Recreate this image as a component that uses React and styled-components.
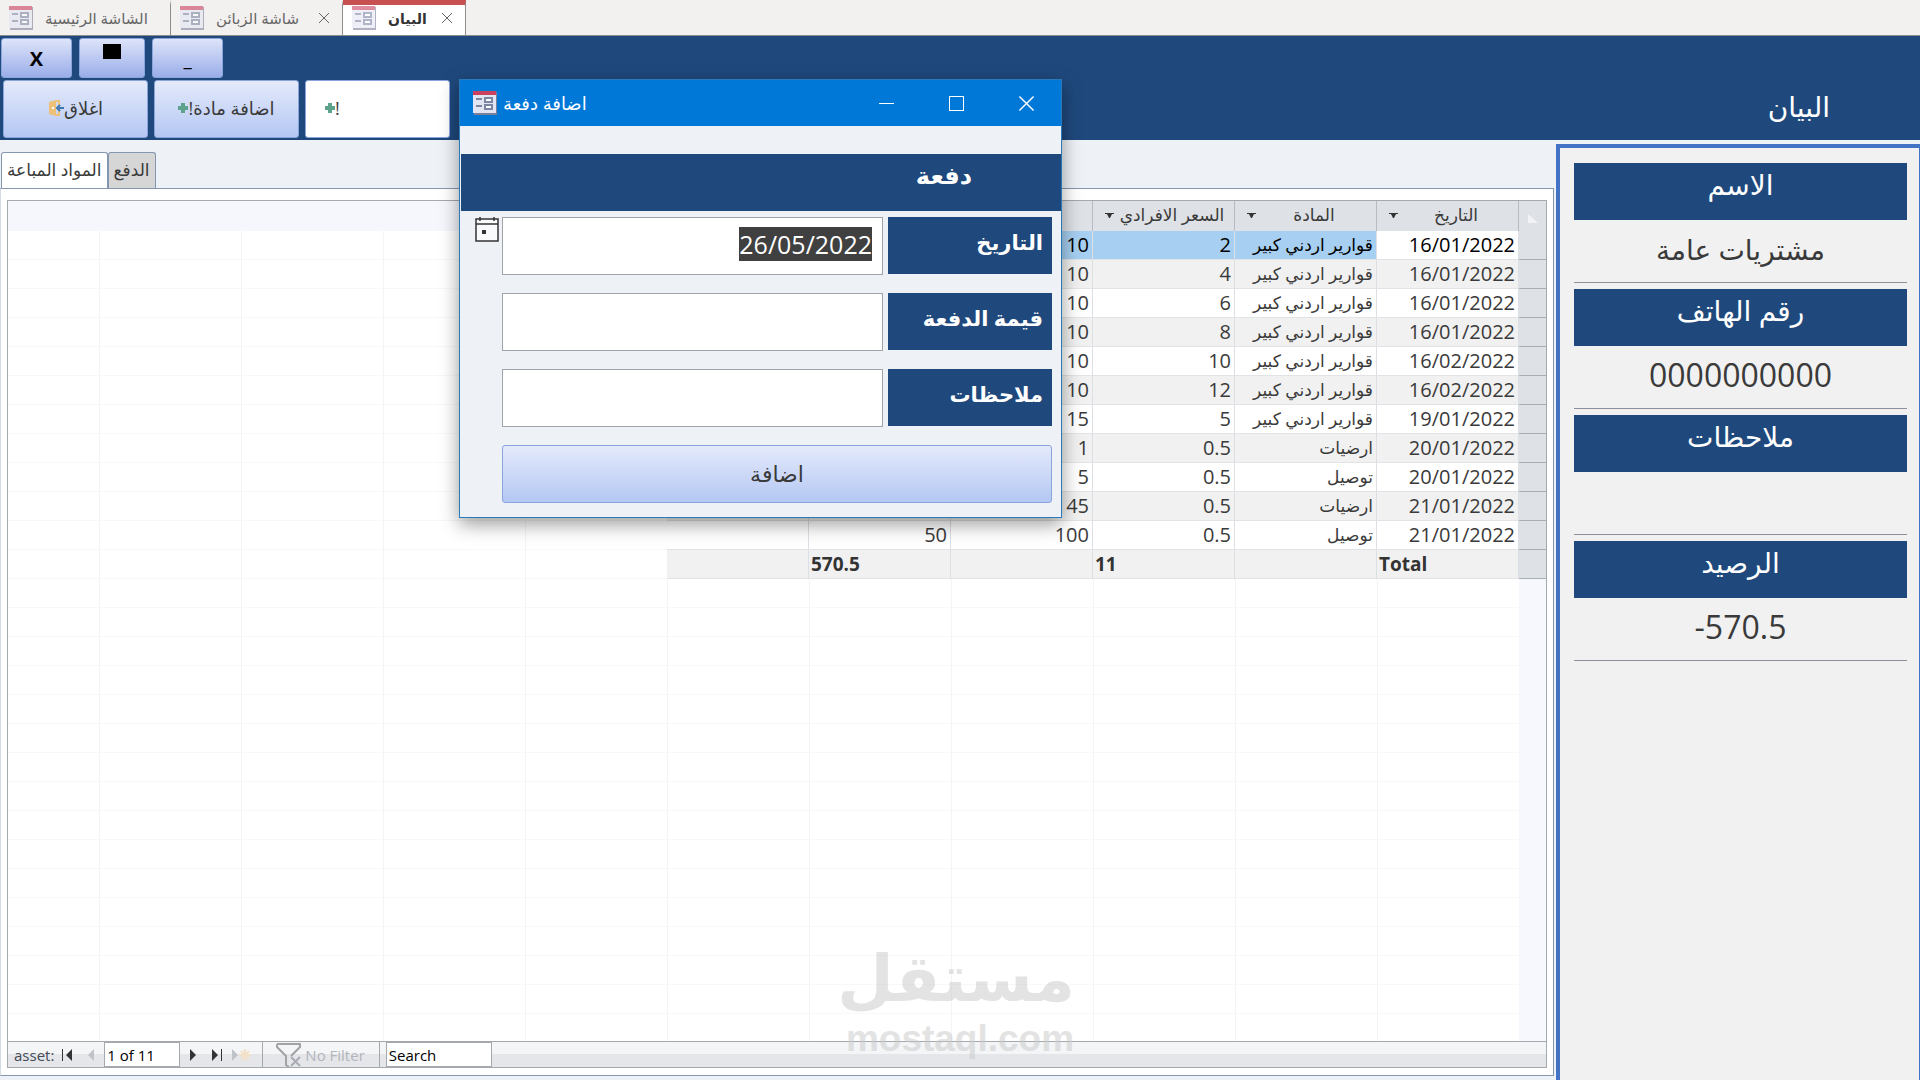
import React, { useEffect, useRef, useState } from 'react'
import styled, { createGlobalStyle } from 'styled-components'

const SALES = [
  { date: '16/01/2022', item: 'قوارير اردني كبير', price: 2, count: 10, sum: 20 },
  { date: '16/01/2022', item: 'قوارير اردني كبير', price: 4, count: 10, sum: 40 },
  { date: '16/01/2022', item: 'قوارير اردني كبير', price: 6, count: 10, sum: 60 },
  { date: '16/01/2022', item: 'قوارير اردني كبير', price: 8, count: 10, sum: 80 },
  { date: '16/02/2022', item: 'قوارير اردني كبير', price: 10, count: 10, sum: 100 },
  { date: '16/02/2022', item: 'قوارير اردني كبير', price: 12, count: 10, sum: 120 },
  { date: '19/01/2022', item: 'قوارير اردني كبير', price: 5, count: 15, sum: 75 },
  { date: '20/01/2022', item: 'ارضيات', price: 0.5, count: 1, sum: 0.5 },
  { date: '20/01/2022', item: 'توصيل', price: 0.5, count: 5, sum: 2.5 },
  { date: '21/01/2022', item: 'ارضيات', price: 0.5, count: 45, sum: 22.5 },
  { date: '21/01/2022', item: 'توصيل', price: 0.5, count: 100, sum: 50 }
]

const HEADERS = ['التاريخ', 'المادة', 'السعر الافرادي', 'العدد', 'المجموع', 'ملاحظات']

const DETAILS = [
  { id: 'name', label: 'الاسم', value: 'مشتريات عامة' },
  { id: 'phone', label: 'رقم الهاتف', value: '0000000000', numeric: true },
  { id: 'notes', label: 'ملاحظات', value: '' },
  { id: 'balance', label: 'الرصيد', value: '-570.5', numeric: true }
]

const FormIcon = ({ faded }) => (
  <svg width='24' height='24' viewBox='0 0 24 24' opacity={faded ? 0.6 : 1} aria-hidden='true'>
    <rect x='1' y='1' width='23' height='23' fill='#7d7f99' />
    <rect x='0' y='0' width='23' height='22' fill='#e3e6f2' />
    <rect x='0' y='0' width='23' height='4' fill='#c9415f' />
    <path d='M3 8h6M3 15h6' stroke='#7d85a0' strokeWidth='2' />
    <rect x='12' y='7' width='7' height='4' fill='#fff' stroke='#7c85a2' strokeWidth='2' />
    <rect x='12' y='14' width='7' height='4' fill='#fff' stroke='#7c85a2' strokeWidth='2' />
  </svg>
)

const CrossIcon = ({ size }) => (
  <svg width={size} height={size} viewBox='0 0 12 12' aria-hidden='true'>
    <path d='M1 1l10 10M11 1L1 11' stroke='currentColor' fill='none' />
  </svg>
)

const PlusIcon = () => (
  <svg width='10' height='10' viewBox='0 0 10 10' aria-hidden='true'>
    <path d='M5 0v10M0 5h10' stroke='#5da28a' strokeWidth='4' />
  </svg>
)

const DoorIcon = () => (
  <svg width='16' height='16' viewBox='0 0 16 16' aria-hidden='true'>
    <path d='M1 2l7-2v16l-7-2z' fill='#edc177' />
    <path d='M8 1h3v4M8 15h3v-4' stroke='#edc177' strokeWidth='2' fill='none' />
    <rect x='4' y='7' width='2' height='2' fill='#fff' />
    <path d='M16 8h-5M12 5L9 8l3 3' stroke='#3f76b0' strokeWidth='2' fill='none' />
  </svg>
)

const CalendarIcon = () => (
  <svg width='24' height='25' viewBox='0 0 24 25' aria-hidden='true'>
    <rect x='1' y='2' width='22' height='22' fill='#f9fafc' stroke='#333' strokeWidth='1.5' />
    <path d='M1 7h22' stroke='#333' strokeWidth='1.5' />
    <path d='M5 0v4M19 0v4' stroke='#333' strokeWidth='1.5' />
    <rect x='7' y='13' width='4' height='4' fill='#333' />
  </svg>
)

const FunnelIcon = () => (
  <svg width='25' height='24' viewBox='0 0 25 24' aria-hidden='true'>
    <path d='M1 1h23v3l-9 9M1 1v3l9 9v9l3 2' stroke='#a3a3a3' strokeWidth='2' fill='none' />
    <path d='M15 14l9 9M24 14l-9 9' stroke='#a9abb5' strokeWidth='2' />
  </svg>
)

const NavIcon = ({ kind }) => (
  <svg width='12' height='12' viewBox='0 0 12 12' fill='currentColor' aria-hidden='true'>
    {kind === 'first' && <path d='M1 0h1v12H1zM11 0v12L5 6z' />}
    {kind === 'prev' && <path d='M9 0v12L3 6z' />}
    {kind === 'next' && <path d='M3 0v12l6-6z' />}
    {kind === 'last' && <path d='M10 0h1v12h-1zM1 0v12l6-6z' />}
  </svg>
)

const NewRecordIcon = () => (
  <svg width='20' height='12' viewBox='0 0 20 12' aria-hidden='true'>
    <path d='M1 0v12l6-6z' fill='#bfc2c8' />
    <path d='M14 0v12M8 6h12M10 2l8 8M18 2l-8 8' stroke='#f3e0c8' strokeWidth='2' />
  </svg>
)

const SortArrow = () => (
  <svg width='9' height='5' viewBox='0 0 9 5' aria-hidden='true'>
    <path d='M0 0h9v1H7L5 5H4L2 1H0z' fill='#333' />
  </svg>
)

const PaymentDialog = () => {
  const [date, setDate] = useState('26/05/2022')
  const [amount, setAmount] = useState('')
  const [notes, setNotes] = useState('')
  const dateInput = useRef(null)

  useEffect(() => {
    dateInput.current.focus()
    dateInput.current.select()
  }, [])

  return (
    <Dialog role='dialog' aria-labelledby='dialogTitle'>
      <DialogBar>
        <FormIcon />
        <DialogTitle id='dialogTitle'>اضافة دفعة</DialogTitle>
        <WindowButton aria-label='minimize'>
          <svg width='15' height='15' viewBox='0 0 15 15'><path d='M0 7.5h15' stroke='#fff' /></svg>
        </WindowButton>
        <WindowButton aria-label='maximize'>
          <svg width='15' height='15' viewBox='0 0 15 15'>
            <rect x='0.5' y='0.5' width='14' height='14' stroke='#fff' fill='none' />
          </svg>
        </WindowButton>
        <WindowButton aria-label='close'><CrossIcon size={17} /></WindowButton>
      </DialogBar>
      <DialogHeading>دفعة</DialogHeading>
      <DialogForm onSubmit={e => e.preventDefault()}>
        <Field>
          <FieldLabel htmlFor='payDate'>التاريخ</FieldLabel>
          <FieldInput id='payDate' ref={dateInput} value={date} onChange={e => setDate(e.target.value)} />
          <PickerButton type='button' aria-label='calendar'><CalendarIcon /></PickerButton>
        </Field>
        <Field>
          <FieldLabel htmlFor='payAmount'>قيمة الدفعة</FieldLabel>
          <FieldInput id='payAmount' value={amount} onChange={e => setAmount(e.target.value)} />
        </Field>
        <Field>
          <FieldLabel htmlFor='payNotes'>ملاحظات</FieldLabel>
          <FieldInput id='payNotes' value={notes} onChange={e => setNotes(e.target.value)} />
        </Field>
        <SubmitButton type='submit'>اضافة</SubmitButton>
      </DialogForm>
    </Dialog>
  )
}

const SalesTable = () => (
  <Table>
    <thead>
      <tr>
        <SelectorHead aria-label='select all'>
          <svg width='10' height='9' viewBox='0 0 10 9'><path d='M0 0v9h10z' fill='#f1f3f6' /></svg>
        </SelectorHead>
        {HEADERS.map(name => (
          <HeadCell key={name}>
            <HeadContent><span>{name}</span><SortArrow /></HeadContent>
          </HeadCell>
        ))}
      </tr>
    </thead>
    <tbody>
      {SALES.map((sale, i) => (
        <Row key={i} $selected={i === 0}>
          <Selector />
          <Cell $current={i === 0}>{sale.date}</Cell>
          <Cell $words>{sale.item}</Cell>
          <Cell>{sale.price}</Cell>
          <Cell>{sale.count}</Cell>
          <Cell>{sale.sum}</Cell>
          <Cell />
        </Row>
      ))}
    </tbody>
    <tfoot>
      <tr>
        <Selector />
        <TotalCell>Total</TotalCell>
        <TotalCell />
        <TotalCell>11</TotalCell>
        <TotalCell />
        <TotalCell>570.5</TotalCell>
        <TotalCell />
      </tr>
    </tfoot>
  </Table>
)

const RecordBar = () => {
  const [search, setSearch] = useState('Search')

  return (
    <Navigation>
      <NavName htmlFor='record'>asset:</NavName>
      <NavButton aria-label='first'><NavIcon kind='first' /></NavButton>
      <NavButton aria-label='previous' $dim><NavIcon kind='prev' /></NavButton>
      <NavInput id='record' $width={76} defaultValue='1 of 11' />
      <NavButton aria-label='next'><NavIcon kind='next' /></NavButton>
      <NavButton aria-label='last'><NavIcon kind='last' /></NavButton>
      <NavButton aria-label='new'><NewRecordIcon /></NavButton>
      <FilterButton disabled><FunnelIcon />No Filter</FilterButton>
      <NavInput
        aria-label='search'
        $width={106}
        value={search}
        onChange={e => setSearch(e.target.value)}
      />
    </Navigation>
  )
}

const App = () => (
  <Page>
    <GlobalStyle />
    <DocumentTabs>
      <DocumentTab $width={171}><FormIcon faded /><span>الشاشة الرئيسية</span></DocumentTab>
      <DocumentTab $width={172}>
        <FormIcon faded /><span>شاشة الزبائن</span>
        <CloseTab aria-label='close'><CrossIcon size={12} /></CloseTab>
      </DocumentTab>
      <DocumentTab $width={123} $active>
        <FormIcon faded /><span>البيان</span>
        <CloseTab aria-label='close'><CrossIcon size={12} /></CloseTab>
      </DocumentTab>
    </DocumentTabs>
    <Header>
      <div>
        <ControlRow>
          <ControlButton $width={71}>X</ControlButton>
          <ControlButton $width={66} aria-label='maximize'><Block /></ControlButton>
          <ControlButton $width={71}>_</ControlButton>
        </ControlRow>
        <ActionRow>
          <ActionButton>اغلاق<DoorIcon /></ActionButton>
          <ActionButton>اضافة مادة!<PlusIcon /></ActionButton>
          <ActionButton $plain>!<PlusIcon /></ActionButton>
        </ActionRow>
      </div>
      <Title>البيان</Title>
    </Header>
    <Content>
      <Main>
        <PageTabs>
          <PageTab $active>المواد المباعة</PageTab>
          <PageTab>الدفع</PageTab>
        </PageTabs>
        <TabPane>
          <Sheet>
            <SalesTable />
          </Sheet>
          <RecordBar />
        </TabPane>
      </Main>
      <Sidebar>
        {DETAILS.map(detail => (
          <Detail key={detail.id}>
            <DetailLabel htmlFor={detail.id}>{detail.label}</DetailLabel>
            <DetailValue id={detail.id} value={detail.value} $numeric={detail.numeric} readOnly />
          </Detail>
        ))}
      </Sidebar>
    </Content>
    <PaymentDialog />
    <Watermark>
      <WatermarkName>مستقل</WatermarkName>
      <WatermarkSite>mostaql.com</WatermarkSite>
    </Watermark>
  </Page>
)

const GlobalStyle = createGlobalStyle`
  * {
    box-sizing: border-box;
  }
  body {
    margin: 0;
  }
  body, button, input {
    color: #3a3a3a;
    font-family: 'Open Sans', 'Noto Sans', 'DejaVu Sans', sans-serif;
  }
`
const Page = styled.div`
  background: #eef2f7;
  display: flex;
  flex-direction: column;
  height: 100vh;
  overflow: hidden;
  position: relative;
`
const DocumentTabs = styled.nav`
  background: #f3f1f0;
  border-bottom: 1px solid #8c8c8c;
  display: flex;
  flex: none;
  height: 36px;
`
const DocumentTab = styled.div`
  align-items: center;
  background: ${props => props.$active ? '#fff' : 'transparent'};
  border-right: 1px solid #8c8c8c;
  border-top: 5px solid ${props => props.$active ? '#c75050' : 'transparent'};
  color: ${props => props.$active ? '#333' : '#666'};
  display: flex;
  font-size: ${props => props.$active ? 14 : 15}px;
  font-weight: ${props => props.$active ? 700 : 400};
  gap: 12px;
  padding: 0 12px 4px 9px;
  white-space: nowrap;
  width: ${props => props.$width}px;
`
const CloseTab = styled.button`
  background: none;
  border: none;
  color: #666;
  display: flex;
  margin-left: auto;
  padding: 0;
`
const Header = styled.header`
  background: #1f497d;
  display: flex;
  flex: none;
  height: 104px;
  justify-content: space-between;
  padding: 2px 90px 0 1px;
`
const ControlRow = styled.div`
  display: flex;
  gap: 7px;
`
const ControlButton = styled.button`
  align-items: center;
  background: linear-gradient(#dde4f9, #9aade9);
  border: 1px solid #8aa4dc;
  border-radius: 3px;
  color: #000;
  display: flex;
  font-size: 20px;
  font-weight: 700;
  height: 40px;
  justify-content: center;
  width: ${props => props.$width}px;
`
const Block = styled.span`
  background: #000;
  height: 15px;
  margin-bottom: 14px;
  width: 18px;
`
const ActionRow = styled.div`
  direction: ltr;
  display: flex;
  gap: 6px;
  padding: 2px 0 0 2px;
`
const ActionButton = styled.button`
  align-items: center;
  background: ${props => props.$plain ? '#fff' : 'linear-gradient(#e4eafb, #b4c7f3)'};
  border: 1px solid #8aa4dc;
  border-radius: 3px;
  direction: rtl;
  display: flex;
  font-size: 18px;
  height: 58px;
  justify-content: ${props => props.$plain ? 'flex-end' : 'center'};
  padding: 0 19px 2px;
  width: 145px;
`
const Title = styled.h1`
  color: #fff;
  direction: rtl;
  font-size: 28px;
  font-weight: 400;
  line-height: 36px;
  margin: 50px 0 0;
`
const Content = styled.div`
  display: flex;
  flex: 1;
  gap: 2px;
  min-height: 0;
`
const Main = styled.main`
  display: flex;
  flex: 1;
  flex-direction: column;
  padding: 12px 0 4px;
`
const PageTabs = styled.div`
  display: flex;
  padding-left: 1px;
`
const PageTab = styled.button`
  background: ${props => props.$active ? '#fff' : '#d6d6d6'};
  border: 1px solid #8497b0;
  border-bottom: none;
  border-radius: 3px 3px 0 0;
  direction: rtl;
  font-size: 17px;
  height: 36px;
  margin-bottom: ${props => props.$active ? -1 : 0}px;
  padding: 0 5px 2px;
  white-space: nowrap;
`
const TabPane = styled.section`
  background: #fff;
  border: 1px solid #8497b0;
  border-left-color: #d5dbe5;
  display: flex;
  flex: 1;
  flex-direction: column;
  min-height: 0;
  padding: 11px 6px 7px;
`
const Sheet = styled.div`
  background:
    linear-gradient(to left, #f7f8fe 27px, transparent 27px),
    repeating-linear-gradient(transparent 0 28px, #f8f8fa 28px 29px) 0 30px no-repeat,
    linear-gradient(#f6f7fd 30px, transparent 30px),
    repeating-linear-gradient(to left, #f4f4f7 0 1px, transparent 1px 142px) -26px 0;
  border: 1px solid #a5a8ad;
  border-bottom: none;
  direction: rtl;
  flex: 1;
  overflow: hidden;
`
const Table = styled.table`
  border-collapse: separate;
  border-spacing: 0;
  font-size: 20px;
  line-height: 28px;
  table-layout: fixed;
  width: 879px;
`
const SelectorHead = styled.th`
  background: #dee1e6;
  line-height: 12px;
  padding: 0;
  width: 27px;
`
const HeadCell = styled.th`
  background: #dee1e6;
  border-right: 1px solid #b7bcc4;
  font-size: 17px;
  font-weight: 400;
  height: 30px;
  line-height: 26px;
  padding: 0 0 2px;
  white-space: nowrap;
  width: 142px;
`
const HeadContent = styled.div`
  align-items: center;
  display: flex;
  padding: 0 4px 0 8px;

  span {
    flex: 1;
  }
  svg {
    margin-left: 4px;
  }
`
const Selector = styled.td`
  background: #dee1e6;
  border-bottom: 1px solid #a9adb5;
  padding: 0;
`
const Cell = styled.td`
  border-bottom: 1px solid #e1e3e6;
  border-right: 1px solid #dcdfe3;
  direction: rtl;
  font-size: ${props => props.$words ? 17 : 20}px;
  height: 29px;
  overflow: hidden;
  padding: 0 3px;
  text-align: right;
  white-space: nowrap;
  ${props => props.$current && 'background: #fff;'}
`
const Row = styled.tr`
  background: #fff;
  ${props => props.$selected && 'color: #000;'}

  &:nth-child(even) {
    background: #f1f1f1;
  }
  ${Cell}:not(:nth-child(2)) {
    ${props => props.$selected && 'background: #a6cff1;'}
  }
`
const TotalCell = styled.td`
  background: #f1f1f1;
  border-bottom: 1px solid #e1e3e6;
  border-right: 1px solid #dcdfe3;
  color: #333;
  font-size: 19px;
  font-weight: 700;
  height: 29px;
  padding: 0 2px;
  text-align: left;
`
const Navigation = styled.div`
  align-items: center;
  background: linear-gradient(#f4f5f7 50%, #e4e6ea 50%);
  border: 1px solid #a5a8ad;
  display: flex;
  flex: none;
  font-size: 15px;
  gap: 2px;
  height: 27px;
  padding-left: 6px;
`
const NavName = styled.label`
  color: #444b57;
`
const NavButton = styled.button`
  align-items: center;
  background: none;
  border: none;
  color: ${props => props.$dim ? '#bfc2c8' : '#333'};
  display: flex;
  height: 24px;
  justify-content: center;
  min-width: 22px;
  padding: 0;
`
const NavInput = styled.input`
  border: 1px solid #a5a8ad;
  color: #000;
  font-size: 15px;
  height: 25px;
  padding: 0 2px;
  width: ${props => props.$width}px;
`
const FilterButton = styled.button`
  align-items: center;
  background: none;
  border: solid #a5a8ad;
  border-width: 0 1px;
  color: #b3b5bb;
  display: flex;
  font-size: 15px;
  gap: 4px;
  height: 25px;
  margin: 0 4px 0 8px;
  padding: 0 14px 0 13px;
`
const Sidebar = styled.aside`
  background: #f1f1f1;
  border: 4px solid #4472c4;
  border-bottom: none;
  border-right-width: 1px;
  direction: rtl;
  display: flex;
  flex-direction: column;
  gap: 6px;
  margin-top: 4px;
  padding: 15px 12px 0 14px;
  width: 364px;
`
const Detail = styled.div`
  display: flex;
  flex-direction: column;
`
const DetailLabel = styled.label`
  background: #1f497d;
  color: #fff;
  font-size: 28px;
  height: 57px;
  line-height: 42px;
  text-align: center;
`
const DetailValue = styled.input`
  background: none;
  border: none;
  border-bottom: 1px solid #8f8f99;
  direction: ltr;
  font-size: ${props => props.$numeric ? 32 : 28}px;
  height: 63px;
  padding: 0 0 5px;
  text-align: center;
  width: 100%;
`
const Dialog = styled.div`
  background: #eef2f7;
  border: 1px solid #2a7ab8;
  box-shadow: 0 6px 18px rgba(0, 0, 0, 0.4);
  left: 459px;
  position: absolute;
  top: 79px;
  width: 603px;
`
const DialogBar = styled.div`
  align-items: center;
  background: #0078d7;
  color: #fff;
  display: flex;
  height: 46px;
  padding-left: 13px;
`
const DialogTitle = styled.span`
  flex: 1;
  font-size: 18px;
  padding-left: 6px;
`
const WindowButton = styled.button`
  align-items: center;
  background: none;
  border: none;
  color: #fff;
  display: flex;
  height: 46px;
  justify-content: center;
  padding: 0;
  width: 70px;
`
const DialogHeading = styled.h2`
  background: #1f497d;
  color: #fff;
  direction: rtl;
  font-size: 24px;
  height: 57px;
  line-height: 42px;
  margin: 28px 0 0 1px;
  padding-right: 89px;
`
const DialogForm = styled.form`
  direction: rtl;
  display: flex;
  flex-direction: column;
  gap: 18px;
  padding: 6px 9px 14px 15px;
`
const Field = styled.div`
  align-items: flex-start;
  display: flex;
`
const FieldLabel = styled.label`
  background: #1f497d;
  color: #fff;
  font-size: 21px;
  font-weight: 700;
  height: 57px;
  line-height: 50px;
  margin-left: 5px;
  padding-right: 9px;
  white-space: nowrap;
  width: 164px;
`
const FieldInput = styled.input`
  background: #fff;
  border: 1px solid #a0a3a8;
  font-size: 25px;
  height: 58px;
  outline: none;
  padding: 0 10px 4px;
  width: 381px;

  &::selection {
    background: #404040;
    color: #fff;
  }
`
const PickerButton = styled.button`
  background: none;
  border: none;
  display: flex;
  padding: 0 3px 0 0;
`
const SubmitButton = styled.button`
  background: linear-gradient(#e4eafb, #b4c7f3);
  border: 1px solid #8aa4dc;
  border-radius: 3px;
  font-size: 22px;
  height: 58px;
  padding-bottom: 4px;
  width: 550px;
`
const Watermark = styled.div`
  bottom: 20px;
  color: #c8c8c8;
  font-weight: 700;
  left: 845px;
  opacity: 0.5;
  pointer-events: none;
  position: absolute;
  text-align: center;
  width: 230px;
`
const WatermarkName = styled.div`
  direction: rtl;
  font-family: 'DejaVu Sans', sans-serif;
  font-size: 65px;
  line-height: 78px;
`
const WatermarkSite = styled.div`
  font-family: 'Liberation Sans', sans-serif;
  font-size: 37px;
  line-height: 42px;
`

export default App
